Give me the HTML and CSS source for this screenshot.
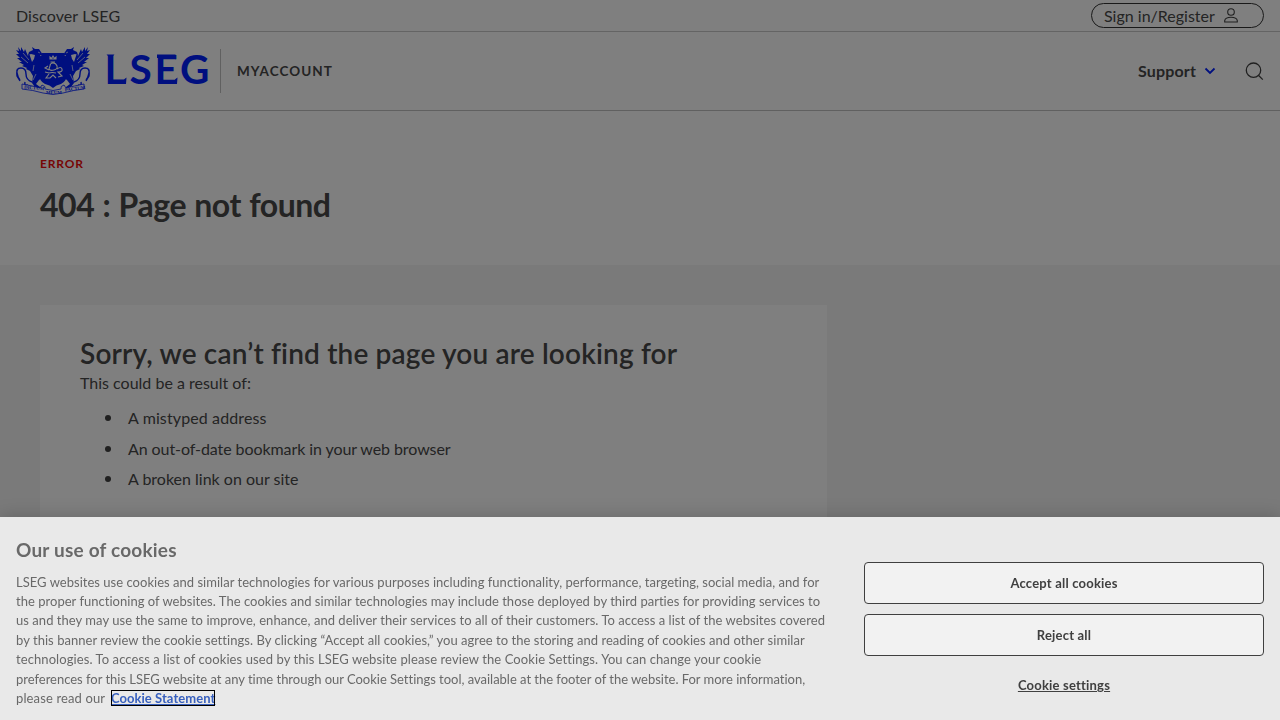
FILE: index.html
```
<!DOCTYPE html>
<html lang="en">
<head>
<meta charset="utf-8">
<title>404 : Page not found</title>
<link rel="stylesheet" href="styles.css">
</head>
<body>
<div class="topbar">
  <a class="discover">Discover LSEG</a>
  <a class="signin"><span>Sign in/Register</span>
    <svg class="user" width="14" height="15" viewBox="0 0 14 15"><circle cx="7" cy="4" r="3.3"/><path d="M.7 14V12.6C1.2 10.4 3.8 9.3 7 9.3s5.800 1.100 6.300 3.300V14z"/></svg>
  </a>
</div>
<header class="header">
  <svg class="logo" width="194" height="52" viewBox="0 0 194 52">
    <defs>
      <g id="griffin">
        <path d="M2 2l3 4 0-4 3 5 1-3 3 7 1-3 2 6 1 3 2-3 1-4-4-1-3 1 1-3 4-2-1-3 3 2 4 0 2 3 2 3-3 0 2 3-2 3-1 5 2 3 6-3 1 2-6 6 1 3-4 3-3 4 4 3 1 3-7 0 1-3-3-4 1-7-3-5-4-2 1-1-5-2 2-1-5-3 3 0-5-4 3 0-4-4 3 0-3-4 3 1z"/>
        <path class="tail" d="M16 37q-6-2-6-8t-5-6-4 5 3 7M3 23q-3 2-2 8l3 5M9 37q-1 4 3 3"/>
        <path class="gap" d="M7 8l6 7M5 12l7 6M18 20l-1 6M20 29l-3 6M22 7l2 1M24 27l3-2"/>
      </g>
    </defs>
    <use href="#griffin"/>
    <use href="#griffin" transform="matrix(-1 0 0 1 74 0)"/>
    <path d="M26 8H48Q48 11 51 12V29Q51 36 45 39Q40 40 37 43Q34 40 29 39Q23 36 23 29V12Q26 11 26 8Z"/>
    <path class="lion" d="M34 14l0-2 1.500 1.500 1.500-2.500 1.500 2.500 1.500-1.500 0 2zM34.500 17h4.500M34 21q0-3 3-3t4 3-3 4-5-1zM32 21l-3 2 4 2M41 24q4-3 5 0t-4 3l4 4-4 1M40 28q-4-1-7 0l-4-1M33 29l-3 4h4l3-3 3 3"/>
    <path class="ribbon" d="M6 39Q18 41 24 43L26 40Q30 41 29 44Q37 47 45 44Q44 41 48 40L50 43Q58 41 68 39V44Q58 45 47 48Q37 51 27 48Q17 45 6 44Z"/>
    <g class="motto"><text x="8" y="43.500" transform="rotate(5 8 43.500)">DICTUM</text><text x="30" y="48.800">MEUM</text><text x="49" y="46.500" transform="rotate(-7 49 46.500)">PACTUM</text></g>
    <text class="wordmark" x="88.500 113.500 138.500 164" y="39">LSEG</text>
    <path d="M90.500 9.500h8l-2 2h-4zM141 9.500h18.500l.5 5-2-1.500h-17zM108.500 34l2-1.500-.5 6.500h-5zM159.500 34l2-1.500-.5 6.500h-5z"/>
  </svg>
  <span class="divider"></span>
  <span class="site">MYACCOUNT</span>
  <nav class="nav">
    <a class="support">Support</a>
    <svg class="chevron" width="12" height="8" viewBox="0 0 12 8"><path d="M1.500 1.500L6 6l4.500-4.500"/></svg>
    <svg class="search" width="19" height="19" viewBox="0 0 19 19"><circle cx="8.500" cy="8.200" r="7.200"/><path d="M13.400 13.200L17.800 17.600"/></svg>
  </nav>
</header>
<section class="hero">
  <p class="eyebrow">ERROR</p>
  <h1>404 : Page not found</h1>
</section>
<main class="main">
  <article class="card">
    <h2>Sorry, we can’t find the page you are looking for</h2>
    <p class="lead">This could be a result of:</p>
    <ul>
      <li class="l1">A mistyped address</li>
      <li class="l2">An out-of-date bookmark in your web browser</li>
      <li class="l3">A broken link on our site</li>
    </ul>
  </article>
</main>
<div class="overlay"></div>
<section class="cookies">
  <div class="copy">
    <h3>Our use of cookies</h3>
    <p>
      <span class="c1">LSEG websites use cookies and similar technologies for various purposes including functionality, performance, targeting, social media, and for</span>
      <span class="c2">the proper functioning of websites. The cookies and similar technologies may include those deployed by third parties for providing services to</span>
      <span class="c3">us and they may use the same to improve, enhance, and deliver their services to all of their customers. To access a list of the websites covered</span>
      <span class="c4">by this banner review the cookie settings. By clicking “Accept all cookies,” you agree to the storing and reading of cookies and other similar</span>
      <span class="c5">technologies. To access a list of cookies used by this LSEG website please review the Cookie Settings. You can change your cookie</span>
      <span class="c6">preferences for this LSEG website at any time through our Cookie Settings tool, available at the footer of the website. For more information,</span>
      <span class="c7">please read our <a>Cookie Statement</a></span>
    </p>
  </div>
  <div class="actions">
    <button class="accept">Accept all cookies</button>
    <button class="reject">Reject all</button>
    <a class="settings">Cookie settings</a>
  </div>
</section>
</body>
</html>
```

FILE: styles.css
```
* { box-sizing: border-box; }
body { margin: 0; height: 720px; overflow: hidden; background: #fff; color: #484848; font-family: Lato, "Open Sans", sans-serif; font-size: 16px; font-variant-ligatures: none; }
h1, h2, h3, p, ul { margin: 0; padding: 0; white-space: nowrap; }
svg { display: block; flex: none; fill: none; stroke: #404040; }
.topbar { height: 32px; padding: 0 16px; display: flex; align-items: center; justify-content: space-between; border-bottom: 1px solid #c8c8c8; }
.discover { letter-spacing: .11px; padding-bottom: 1px; }
.signin { width: 173px; height: 25px; border: 1px solid #333; border-radius: 13px; padding-left: 12px; display: flex; align-items: center; gap: 9px; }
.signin span { padding-bottom: 1px; }
.user { stroke-width: 1.1; }
.header { height: 79px; padding: 0 16px; display: flex; align-items: center; border-bottom: 1px solid #c0c0c0; }
.logo { fill: #001eff; stroke: none; overflow: visible; }
.tail { fill: none; stroke: #001eff; stroke-width: 1.4; }
.gap { fill: none; stroke: #fff; stroke-width: .7; }
.lion { fill: none; stroke: #fff; stroke-width: 1.1; }
.ribbon { fill: #fff; stroke: #001eff; stroke-width: .8; }
.motto { font: bold 4.8px "Liberation Serif", serif; }
.wordmark { font: bold 40.500px Lato, sans-serif; }
.divider { width: 1px; height: 44px; margin-left: 10px; background: #c0c0c0; }
.site { margin-left: 16px; font-size: 13.500px; font-weight: 700; letter-spacing: 1.050px; }
.nav { margin-left: auto; display: flex; align-items: center; }
.support { font-weight: 700; letter-spacing: .14px; padding-bottom: 2px; }
.chevron { margin-left: 8px; stroke: #001eff; stroke-width: 1.8; }
.search { margin-left: 29px; stroke-width: 1.3; }
.hero { height: 154px; padding: 45px 40px 0; }
.eyebrow { font-size: 12px; line-height: 16px; font-weight: 700; letter-spacing: .85px; color: #ee0a0a; }
h1 { margin-top: 13px; font-size: 32px; line-height: 40px; font-weight: 700; letter-spacing: -.45px; word-spacing: .9px; }
.main { height: 455px; padding: 40px 40px 0; background: #f5f5f5; }
.card { width: 787px; height: 415px; padding: 32px 40px 0; background: #fff; }
h2 { font-size: 28px; line-height: 32px; font-weight: 600; letter-spacing: .17px; }
.lead { margin-top: 4px; line-height: 20px; }
ul { margin-top: 10px; padding-left: 25px; list-style: none; }
li { display: flex; align-items: center; gap: 17px; line-height: 30.500px; }
li::before { content: ""; width: 6px; height: 6px; border-radius: 50%; background: #404040; }
.l1 { letter-spacing: .12px; }
.l2 { letter-spacing: -.08px; }
.overlay { position: fixed; inset: 0; background: rgba(0, 0, 0, .5); }
.cookies { position: fixed; left: 0; right: 0; bottom: 0; height: 203px; padding: 0 16px; display: flex; justify-content: space-between; background: #e9e9e9; color: #696969; box-shadow: 0 0 18px rgba(0, 0, 0, .2); font-size: 13px; }
.copy h3 { margin-top: 21px; font-size: 19px; line-height: 24px; font-weight: 700; letter-spacing: .2px; }
.copy p { margin-top: 10.500px; line-height: 19.480px; }
.copy span { display: block; width: max-content; }
.c1, .c2 { letter-spacing: .021px; }
.c3, .c4 { letter-spacing: .042px; }
.c5 { letter-spacing: .085px; }
.c6 { letter-spacing: -.021px; }
.c7 { letter-spacing: .13px; }
.copy a { margin-left: 2.500px; font-weight: 700; letter-spacing: .06px; color: #3860be; text-decoration: underline; outline: 1px solid #000; outline-offset: -1px; }
.actions { width: 400px; padding-top: 45px; display: flex; flex-direction: column; align-items: center; }
button { width: 400px; height: 42px; margin-bottom: 10px; padding: 0 0 1px; background: #f2f2f2; border: 1px solid #404040; border-radius: 4px; color: #404040; font: 700 13px Lato, sans-serif; letter-spacing: .2px; }
.settings { margin-top: 11px; color: #404040; font-weight: 700; letter-spacing: .2px; text-decoration: underline; }
```
